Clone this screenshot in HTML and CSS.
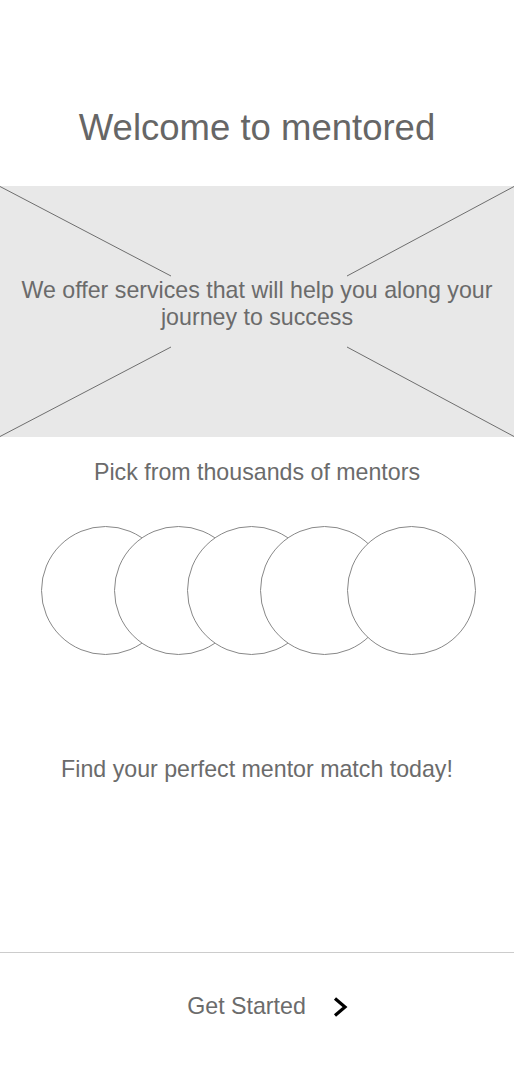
FILE: index.html
```html
<!DOCTYPE html>
<html>
<head>
<meta charset="utf-8">
<link rel="stylesheet" href="styles.css">
</head>
<body>
<div class="screen">
  <h1 class="title">Welcome to mentored</h1>
  <div class="hero">
    <svg class="hero-lines" width="514" height="251" viewBox="0 0 514 251">
      <line x1="0" y1="0.5" x2="171" y2="90" />
      <line x1="0" y1="250.5" x2="171" y2="161" />
      <line x1="514" y1="0.5" x2="347" y2="90" />
      <line x1="514" y1="250.5" x2="347" y2="161" />
    </svg>
    <p class="hero-text">We offer services that will help you along your journey to success</p>
  </div>
  <p class="pick">Pick from thousands of mentors</p>
  <div class="circles">
    <span class="circle"></span>
    <span class="circle"></span>
    <span class="circle"></span>
    <span class="circle"></span>
    <span class="circle"></span>
  </div>
  <p class="find">Find your perfect mentor match today!</p>
  <div class="footer">
    <span class="cta-text">Get Started</span>
    <svg class="chevron" width="16" height="22" viewBox="0 0 16 22">
      <path d="M3 2.5 L13 11 L3 19.5" fill="none" stroke="#000" stroke-width="3.2" stroke-linejoin="miter" />
    </svg>
  </div>
</div>
</body>
</html>
```
FILE: styles.css
```css
html, body {
  margin: 0;
  padding: 0;
  background: #fff;
}
body {
  font-family: "Liberation Sans", Arial, sans-serif;
  color: #6b6b6b;
}
.screen {
  width: 514px;
  height: 1080px;
  display: flex;
  flex-direction: column;
}
.title {
  margin: 108px 0 0;
  font-size: 36.5px;
  font-weight: normal;
  line-height: 40px;
  text-align: center;
  color: #666;
}
.hero {
  position: relative;
  margin-top: 38px;
  height: 251px;
  background: #e8e8e8;
  display: flex;
  align-items: center;
  justify-content: center;
}
.hero-lines {
  position: absolute;
  left: 0;
  top: 0;
}
.hero-lines line {
  stroke: #6e6e6e;
  stroke-width: 1;
}
.hero-text {
  position: relative;
  margin: 0 0 16px;
  padding: 0 10px;
  font-size: 23.2px;
  line-height: 27px;
  text-align: center;
  color: #6b6b6b;
}
.pick {
  margin: 22px 0 0;
  font-size: 23.2px;
  line-height: 27px;
  text-align: center;
}
.circles {
  display: flex;
  margin: 40px 0 0 41px;
}
.circle {
  flex: none;
  width: 127px;
  height: 127px;
  border: 1px solid #888;
  border-radius: 50%;
  background: #fff;
  margin-left: -56px;
}
.circle:first-child {
  margin-left: 0;
}
.circle:last-child {
  margin-left: -42px;
}
.find {
  margin: 101px 0 0;
  font-size: 23.2px;
  line-height: 27px;
  text-align: center;
}
.footer {
  margin-top: 169px;
  border-top: 1px solid #cccccc;
  display: flex;
  justify-content: center;
  align-items: center;
  gap: 26px;
  padding: 40px 0 0 21px;
}
.cta-text {
  font-size: 23.2px;
  line-height: 27px;
  color: #6b6b6b;
}
.chevron {
  display: block;
}
```
